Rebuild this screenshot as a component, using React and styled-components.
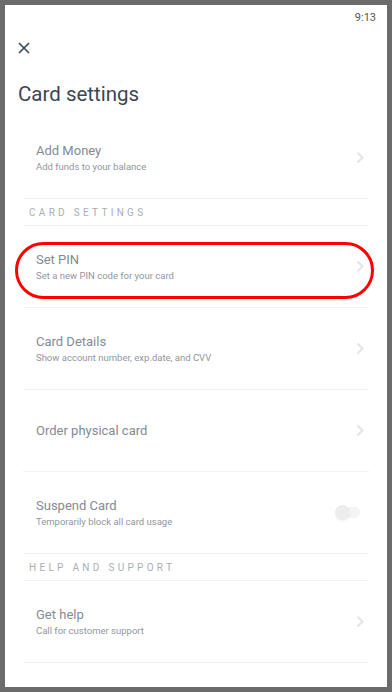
import React from 'react'
import styled, {createGlobalStyle} from 'styled-components'

const Global = createGlobalStyle`
  html, body {
    margin: 0;
    padding: 0;
    background: #6b6b6b;
    font-family: Roboto, "Liberation Sans", sans-serif;
  }
  #root {
    padding: 5px;
  }
`

const Screen = styled.div`
  width: 382px;
  height: 682px;
  background: #fff;
  display: flex;
  flex-direction: column;
  overflow: hidden;
`

const StatusBar = styled.div`
  height: 24px;
  display: flex;
  align-items: center;
  justify-content: flex-end;
  padding-right: 11px;
  font-size: 11px;
  color: #555;
`

const CloseBtn = styled.div`
  width: 12px;
  height: 12px;
  margin: 13px 0 0 13px;
  display: flex;
`

const Title = styled.h1`
  margin: 27px 0 0 13px;
  font-size: 20.5px;
  font-weight: 400;
  color: #3d4653;
  line-height: 26px;
`

const List = styled.div`
  margin: 10px 18px 0;
  display: flex;
  flex-direction: column;
`

const Row = styled.div`
  height: 82px;
  border-bottom: 1px solid #f1f2f3;
  display: flex;
  align-items: center;
  padding: 0 5px 0 13px;
  box-sizing: border-box;
  position: relative;
`

const Texts = styled.div`
  flex: 1;
  display: flex;
  flex-direction: column;
  gap: 2px;
`

const RowTitle = styled.div`
  font-size: 13px;
  color: #838b96;
  line-height: 16px;
`

const RowSub = styled.div`
  font-size: 9.5px;
  color: #90969e;
  line-height: 12px;
`

const SectionHeader = styled.div`
  height: 27px;
  border-bottom: 1px solid #f1f2f3;
  box-sizing: border-box;
  display: flex;
  align-items: center;
  padding-left: 6px;
  font-size: 10px;
  letter-spacing: 3.3px;
  color: #a9aeb4;
`

const Highlight = styled.div`
  position: absolute;
  left: -8px;
  right: -5px;
  top: 16px;
  height: 51px;
  border: 3px solid #f00;
  border-radius: 29px;
`

const Toggle = styled.div`
  width: 24px;
  height: 11px;
  border-radius: 6px;
  background: #f4f4f4;
  position: relative;
  margin-right: 4px;
  &::after {
    content: '';
    position: absolute;
    left: -1px;
    top: -2px;
    width: 15px;
    height: 15px;
    border-radius: 50%;
    background: #ededed;
    box-shadow: 0 1px 2px rgba(0,0,0,0.06);
  }
`

const Chevron = () => (
  <svg width="8" height="13" viewBox="0 0 8 13">
    <path d="M1.5 1.5 L6.5 6.5 L1.5 11.5" fill="none" stroke="#e1e4e8" strokeWidth="2" />
  </svg>
)

const Item = ({title, sub, right, highlight}) => (
  <Row>
    {highlight && <Highlight />}
    <Texts>
      <RowTitle>{title}</RowTitle>
      {sub && <RowSub>{sub}</RowSub>}
    </Texts>
    {right || <Chevron />}
  </Row>
)

export default function App() {
  return (
    <Screen>
      <Global />
      <StatusBar>9:13</StatusBar>
      <CloseBtn>
        <svg width="12" height="12" viewBox="0 0 12 12">
          <path d="M1 1 L11 11 M11 1 L1 11" stroke="#3b4451" strokeWidth="1.6" />
        </svg>
      </CloseBtn>
      <Title>Card settings</Title>
      <List>
        <Item title="Add Money" sub="Add funds to your balance" />
        <SectionHeader>CARD SETTINGS</SectionHeader>
        <Item title="Set PIN" sub="Set a new PIN code for your card" highlight />
        <Item title="Card Details" sub="Show account number, exp.date, and CVV" />
        <Item title="Order physical card" />
        <Item title="Suspend Card" sub="Temporarily block all card usage" right={<Toggle />} />
        <SectionHeader>HELP AND SUPPORT</SectionHeader>
        <Item title="Get help" sub="Call for customer support" />
      </List>
    </Screen>
  )
}
